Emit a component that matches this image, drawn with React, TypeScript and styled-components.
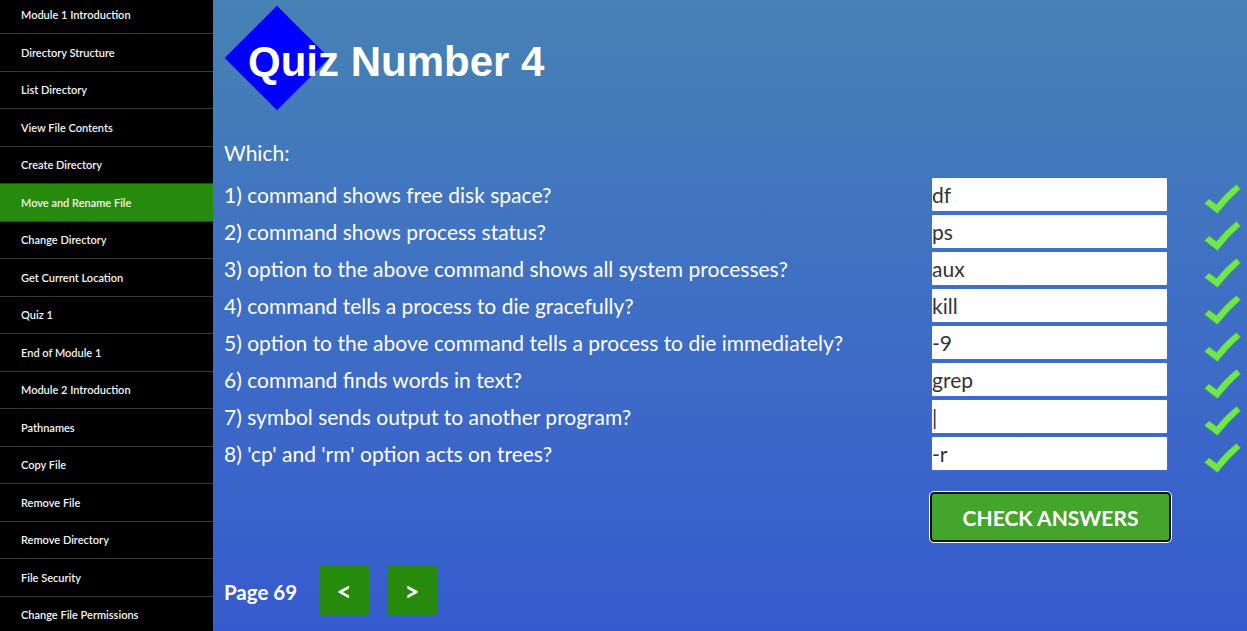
import React from "react";
import styled, { createGlobalStyle } from "styled-components";

const Global = createGlobalStyle`
  html, body { margin: 0; padding: 0; height: 100%; }
  body { font-family: Lato, "Open Sans", sans-serif; overflow: hidden; }
  #root { height: 100%; }
`;

const Page = styled.div`
  display: flex;
  width: 1247px;
  height: 631px;
`;

const Sidebar = styled.nav`
  width: 213px;
  flex: none;
  background: #000;
  display: flex;
  flex-direction: column;
  overflow: hidden;
`;

const NavList = styled.div`
  display: flex;
  flex-direction: column;
  margin-top: -3.5px;
`;

const NavItem = styled.div<{ $active?: boolean }>`
  height: 36.5px;
  flex: none;
  display: flex;
  align-items: center;
  padding-left: 21px;
  border-bottom: 1px solid #3a3a3a;
  background: ${(p) => (p.$active ? "#268a0c" : "#000")};
  color: #f4f4f4;
  font-family: Lato, sans-serif;
  font-size: 11px;
  font-weight: 600;
  white-space: nowrap;
`;

const Main = styled.main`
  flex: 1;
  background: linear-gradient(180deg, #4682b4 0%, #3f70c4 45%, #365bce 100%);
  padding: 0 0 0 11px;
  display: flex;
  flex-direction: column;
  color: #fff;
`;

const Header = styled.div`
  position: relative;
  height: 131px;
  flex: none;
  display: flex;
  align-items: flex-start;
`;

const Diamond = styled.div`
  position: absolute;
  left: 16px;
  top: 21px;
  width: 74px;
  height: 74px;
  background: #0000ff;
  transform: rotate(45deg);
`;

const Title = styled.h1`
  position: relative;
  margin: 36px 0 0 24px;
  font-family: "Liberation Sans", Arial, sans-serif;
  font-weight: 700;
  font-size: 42px;
  line-height: 52px;
  color: #fff;
`;

const Which = styled.div`
  font-size: 21px;
  line-height: 24px;
  height: 45px;
  flex: none;
  padding-top: 10px;
  box-sizing: border-box;
`;

const Grid = styled.div`
  display: grid;
  flex: none;
  grid-template-columns: 707px 237px 73px;
  grid-auto-rows: 37px;
  align-items: center;
`;

const Question = styled.div`
  font-size: 21px;
  line-height: 24px;
  white-space: nowrap;
`;

const Answer = styled.input`
  box-sizing: border-box;
  width: 237px;
  height: 35px;
  margin: 0;
  border: 1px solid #3d6fd0;
  border-radius: 2px;
  background: #fff;
  font-family: Lato, sans-serif;
  font-size: 21px;
  color: #333;
  padding: 0;
  outline: none;
`;

const CheckCell = styled.div`
  display: flex;
  justify-content: flex-end;
  padding-top: 8px;
`;

const ButtonRow = styled.div`
  display: flex;
  flex: none;
  padding-left: 706px;
  margin-top: 20px;
`;

const CheckButton = styled.button`
  width: 241px;
  height: 50px;
  box-sizing: border-box;
  background: #43a52b;
  border: 2px solid #111;
  outline: 1px solid #fff;
  outline-offset: 0;
  border-radius: 4px;
  color: #fff;
  font-family: Lato, sans-serif;
  font-weight: 700;
  font-size: 21px;
  text-transform: uppercase;
  cursor: pointer;
`;

const Footer = styled.div`
  display: flex;
  flex: none;
  align-items: center;
  margin-top: 23px;
  gap: 18px;
`;

const PageLabel = styled.div`
  font-weight: 700;
  font-size: 20.5px;
  line-height: 24px;
  padding-top: 2px;
  width: 77px;
`;

const NavButton = styled.button`
  width: 50px;
  height: 51px;
  flex: none;
  background: #268a0c;
  border: none;
  border-radius: 3px;
  color: #fff;
  font-family: Lato, sans-serif;
  font-weight: 700;
  font-size: 26px;
  padding: 0;
  cursor: pointer;
`;

const Check = () => (
  <svg width="37" height="30" viewBox="0 0 37 30">
    <path
      d="M0.5 19.5 L5 15 L12.5 20.5 Q21 9.5 32.5 0.5 L36.5 5 Q24.5 15.5 13.5 29.5 Z"
      fill="#70e84c"
      stroke="#4fb43a"
      strokeWidth="0.8"
    />
  </svg>
);

const navItems = [
  "Module 1 Introduction",
  "Directory Structure",
  "List Directory",
  "View File Contents",
  "Create Directory",
  "Move and Rename File",
  "Change Directory",
  "Get Current Location",
  "Quiz 1",
  "End of Module 1",
  "Module 2 Introduction",
  "Pathnames",
  "Copy File",
  "Remove File",
  "Remove Directory",
  "File Security",
  "Change File Permissions",
];

const questions: [string, string][] = [
  ["1) command shows free disk space?", "df"],
  ["2) command shows process status?", "ps"],
  ["3) option to the above command shows all system processes?", "aux"],
  ["4) command tells a process to die gracefully?", "kill"],
  ["5) option to the above command tells a process to die immediately?", "-9"],
  ["6) command finds words in text?", "grep"],
  ["7) symbol sends output to another program?", "|"],
  ["8) 'cp' and 'rm' option acts on trees?", "-r"],
];

export default function App() {
  return (
    <>
      <Global />
      <Page>
        <Sidebar>
          <NavList>
            {navItems.map((n) => (
              <NavItem key={n} $active={n === "Move and Rename File"}>
                {n}
              </NavItem>
            ))}
          </NavList>
        </Sidebar>
        <Main>
          <Header>
            <Diamond />
            <Title>Quiz Number 4</Title>
          </Header>
          <Which>Which:</Which>
          <Grid>
            {questions.map(([q, a]) => (
              <React.Fragment key={q}>
                <Question>{q}</Question>
                <Answer defaultValue={a} readOnly />
                <CheckCell>
                  <Check />
                </CheckCell>
              </React.Fragment>
            ))}
          </Grid>
          <ButtonRow>
            <CheckButton>Check Answers</CheckButton>
          </ButtonRow>
          <Footer>
            <PageLabel>Page 69</PageLabel>
            <NavButton>&lt;</NavButton>
            <NavButton>&gt;</NavButton>
          </Footer>
        </Main>
      </Page>
    </>
  );
}
